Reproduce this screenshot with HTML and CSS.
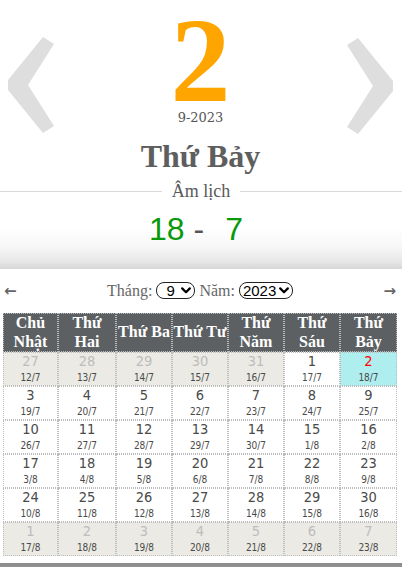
FILE: index.html
```html
<!DOCTYPE html>
<html lang="vi">
<head>
<meta charset="utf-8">
<title>Lịch</title>
<link rel="stylesheet" href="styles.css">
</head>
<body>
<div class="top">
  <div class="hero">
    <svg class="chev" width="46" height="96" viewBox="0 0 46 96"><polygon points="35,0 46,7 20,48 46,89 35,96 0,53 0,43" fill="#dedede"/></svg>
    <div class="center">
      <div class="day">2</div>
      <div class="date">9-2023</div>
      <div class="weekday">Thứ Bảy</div>
    </div>
    <svg class="chev chev-right" width="46" height="96" viewBox="0 0 46 96"><polygon points="11,0 0,7 26,48 0,89 11,96 46,53 46,43" fill="#dedede"/></svg>
  </div>
  <div class="amlich"><span class="amlich-text">Âm lịch</span></div>
  <div class="lunar"><span class="ld">18</span><span class="sep">-</span><span class="ld">7</span></div>
</div>
<div class="cal">
  <div class="nav">
    <span class="arrow">←</span>
    <div class="pick">Tháng: <select class="sel sel-m"><option>9</option></select> Năm: <select class="sel sel-y"><option>2023</option></select></div>
    <span class="arrow">→</span>
  </div>
  <table class="grid">
    <colgroup><col class="c55"><col class="c58"><col class="c56"><col class="c56"><col class="c56"><col class="c56"><col class="c57"></colgroup>
    <thead>
      <tr><th>Chủ<br>Nhật</th><th>Thứ<br>Hai</th><th>Thứ Ba</th><th>Thứ Tư</th><th>Thứ<br>Năm</th><th>Thứ<br>Sáu</th><th>Thứ<br>Bảy</th></tr>
    </thead>
    <tbody>
      <tr>
        <td class="other"><span class="n">27</span><span class="l">12/7</span></td>
        <td class="other"><span class="n">28</span><span class="l">13/7</span></td>
        <td class="other"><span class="n">29</span><span class="l">14/7</span></td>
        <td class="other"><span class="n">30</span><span class="l">15/7</span></td>
        <td class="other"><span class="n">31</span><span class="l">16/7</span></td>
        <td><span class="n">1</span><span class="l">17/7</span></td>
        <td class="today"><span class="n">2</span><span class="l">18/7</span></td>
      </tr>
      <tr>
        <td><span class="n">3</span><span class="l">19/7</span></td>
        <td><span class="n">4</span><span class="l">20/7</span></td>
        <td><span class="n">5</span><span class="l">21/7</span></td>
        <td><span class="n">6</span><span class="l">22/7</span></td>
        <td><span class="n">7</span><span class="l">23/7</span></td>
        <td><span class="n">8</span><span class="l">24/7</span></td>
        <td><span class="n">9</span><span class="l">25/7</span></td>
      </tr>
      <tr>
        <td><span class="n">10</span><span class="l">26/7</span></td>
        <td><span class="n">11</span><span class="l">27/7</span></td>
        <td><span class="n">12</span><span class="l">28/7</span></td>
        <td><span class="n">13</span><span class="l">29/7</span></td>
        <td><span class="n">14</span><span class="l">30/7</span></td>
        <td><span class="n">15</span><span class="l">1/8</span></td>
        <td><span class="n">16</span><span class="l">2/8</span></td>
      </tr>
      <tr>
        <td><span class="n">17</span><span class="l">3/8</span></td>
        <td><span class="n">18</span><span class="l">4/8</span></td>
        <td><span class="n">19</span><span class="l">5/8</span></td>
        <td><span class="n">20</span><span class="l">6/8</span></td>
        <td><span class="n">21</span><span class="l">7/8</span></td>
        <td><span class="n">22</span><span class="l">8/8</span></td>
        <td><span class="n">23</span><span class="l">9/8</span></td>
      </tr>
      <tr>
        <td><span class="n">24</span><span class="l">10/8</span></td>
        <td><span class="n">25</span><span class="l">11/8</span></td>
        <td><span class="n">26</span><span class="l">12/8</span></td>
        <td><span class="n">27</span><span class="l">13/8</span></td>
        <td><span class="n">28</span><span class="l">14/8</span></td>
        <td><span class="n">29</span><span class="l">15/8</span></td>
        <td><span class="n">30</span><span class="l">16/8</span></td>
      </tr>
      <tr>
        <td class="other"><span class="n">1</span><span class="l">17/8</span></td>
        <td class="other"><span class="n">2</span><span class="l">18/8</span></td>
        <td class="other"><span class="n">3</span><span class="l">19/8</span></td>
        <td class="other"><span class="n">4</span><span class="l">20/8</span></td>
        <td class="other"><span class="n">5</span><span class="l">21/8</span></td>
        <td class="other"><span class="n">6</span><span class="l">22/8</span></td>
        <td class="other"><span class="n">7</span><span class="l">23/8</span></td>
      </tr>
    </tbody>
  </table>
</div>
<div class="shade"></div>
</body>
</html>
```

FILE: styles.css
```css
html, body {
  margin: 0;
  padding: 0;
  background: #fff;
}
body {
  font-family: "Liberation Serif", "DejaVu Serif", serif;
  color: #555;
  overflow: hidden;
}
.top {
  height: 269px;
  background: linear-gradient(to bottom, #fff 0, #fff 228px, #f6f6f6 248px, #e6e6e6 262px, #d6d6d6 269px);
}
.hero {
  display: flex;
  align-items: flex-start;
  padding: 0 9px 0 8px;
  height: 176px;
}
.chev {
  flex: none;
  margin-top: 37px;
  display: block;
}
.chev-right {
  margin-top: 38px;
}
.center {
  flex: 1;
  text-align: center;
}
.day {
  padding-top: 11px;
  height: 100px;
  font-family: "Liberation Serif", serif;
  font-weight: bold;
  font-size: 120px;
  line-height: 100px;
  color: #ffa500;
}
.date {
  font-family: "DejaVu Serif", serif;
  font-size: 13px;
  line-height: 14px;
  color: #555;
}
.weekday {
  margin-top: 11px;
  font-family: "Liberation Serif", serif;
  font-weight: bold;
  font-size: 32px;
  line-height: 40px;
  color: #5e5e5e;
}
.amlich {
  display: flex;
  align-items: center;
  margin-top: 4px;
  height: 22px;
}
.amlich::before, .amlich::after {
  content: "";
  flex: 1;
  border-top: 1px solid #d9d9d9;
}
.amlich-text {
  padding: 0 10px;
  font-size: 18px;
  line-height: 22px;
  color: #5a5a5a;
}
.lunar {
  margin-top: 9px;
  display: flex;
  justify-content: center;
  font-family: "Liberation Sans", Arial, sans-serif;
  font-size: 32px;
  line-height: 36px;
  padding-right: 10px;
}
.ld {
  color: #0a990a;
}
.sep {
  color: #555;
  margin: 0 21px 0 9px;
}
.cal {
  padding: 14px 0 7px;
  background: #fff;
}
.nav {
  display: flex;
  align-items: center;
  justify-content: space-between;
  height: 16px;
  padding: 0 6px 0 4px;
}
.arrow {
  font-family: "DejaVu Sans", sans-serif;
  font-size: 15px;
  line-height: 16px;
  color: #666;
  font-weight: bold;
}
.pick {
  font-size: 16px;
  line-height: 16px;
  color: #666;
  white-space: nowrap;
}
.sel {
  -webkit-appearance: none;
  appearance: none;
  box-sizing: border-box;
  height: 17px;
  padding: 0 0 0 3px;
  border: 1px solid #222;
  border-radius: 8px;
  background: #fff url("data:image/svg+xml;utf8,<svg xmlns='http://www.w3.org/2000/svg' width='10' height='7' viewBox='0 0 10 7'><path d='M1.2 1.4 5 5.2 8.8 1.4' fill='none' stroke='black' stroke-width='2.2' stroke-linecap='round' stroke-linejoin='round'/></svg>") no-repeat right 3px center;
  background-size: 10px 7px;
  color: #000;
  font-family: "Liberation Sans", Arial, sans-serif;
  font-size: 15px;
  line-height: 15px;
  vertical-align: middle;
  margin: -3px 0 0;
}
.sel-m {
  width: 39px;
  padding-left: 9px;
}
.sel-y {
  width: 54px;
  padding-left: 3px;
}
.grid {
  margin: 14px 5px 0 3px;
  width: 394px;
  table-layout: fixed;
  border-collapse: separate;
  border-spacing: 0;
}
.c55 { width: 55px; }
.c56 { width: 56px; }
.c57 { width: 57px; }
.c58 { width: 58px; }
.grid th {
  background: #5c6063;
  color: #fff;
  font-family: "Liberation Serif", serif;
  font-weight: bold;
  font-size: 16px;
  line-height: 18.5px;
  padding: 0;
  border: 1px dotted #b9bcbe;
  white-space: nowrap;
}
.grid td {
  padding: 0;
  text-align: center;
  vertical-align: top;
  border: 1px dotted #bdbdbd;
  background: #fff;
}
.n {
  display: block;
  font-family: "DejaVu Sans Condensed", "DejaVu Sans", sans-serif;
  font-stretch: condensed;
  font-size: 14.5px;
  line-height: 17px;
  color: #4a4a4a;
}
.l {
  display: block;
  font-family: "DejaVu Sans Condensed", "DejaVu Sans", sans-serif;
  font-stretch: condensed;
  font-size: 10px;
  line-height: 15px;
  color: #4a4a4a;
}
.grid td.other {
  background: #ebeae4;
}
.grid td.other .n {
  color: #bdbdbd;
}
.grid td.today {
  background: #afeeee;
}
.grid td.today .n {
  color: #f00;
}
.shade {
  height: 20px;
  background: linear-gradient(to bottom, #8a8a8a, #b5b5b5);
}
```
